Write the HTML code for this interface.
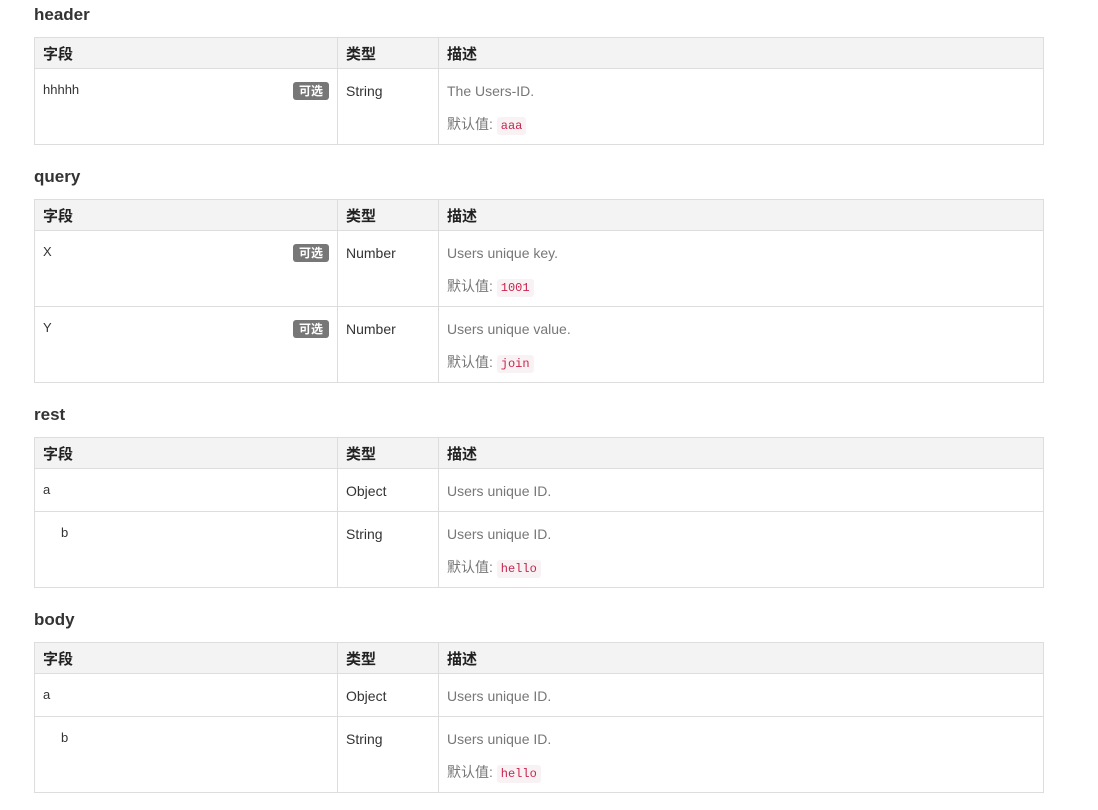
<!DOCTYPE html>
<html><head><meta charset="utf-8"><style>
body{margin:0;background:#fff;font-family:"Liberation Sans","Noto Sans CJK SC",sans-serif;}
h4{position:absolute;left:34px;margin:0;font-size:17px;font-weight:bold;color:#333;}
table{position:absolute;left:34px;width:1010px;border-collapse:collapse;table-layout:fixed;}
td,th{border:1px solid #ddd;vertical-align:top;padding:0;}
th{background:#f3f3f3;height:30px;text-align:left;font-size:15px;font-weight:bold;color:#222;vertical-align:middle;padding:0 8px}
td>div{box-sizing:border-box;overflow:hidden;padding:0 8px;position:relative}
.r76 td>div{height:75px}.r43 td>div{height:42px}
.f div{font-size:13px;color:#333;padding-top:13px}
.t div{font-size:14px;color:#333;padding-top:14px}
.d div{font-size:14px;color:#777;padding-top:13px}
.d p{margin:0 0 15px 0;line-height:18px}
.badge{position:absolute;right:8px;top:13px;background:#777;color:#fff;font-size:12px;font-weight:bold;padding:1px 6px;border-radius:3px;line-height:16px}
code{font-family:"Liberation Mono",monospace;font-size:12px;color:#c7254e;background:#f9f2f4;padding:2px 4px;border-radius:3px}
</style></head><body>
<h4 style="top:5px">header</h4>
<table style="top:37px"><colgroup><col style="width:303px"><col style="width:101px"><col></colgroup>
<tr><th>字段</th><th>类型</th><th>描述</th></tr>
<tr class="r76"><td class="f"><div>hhhhh<span class="badge">可选</span></div></td><td class="t"><div>String</div></td><td class="d"><div><p>The Users-ID.</p><p>默认值: <code>aaa</code></p></div></td></tr>
</table>
<h4 style="top:167px">query</h4>
<table style="top:199px"><colgroup><col style="width:303px"><col style="width:101px"><col></colgroup>
<tr><th>字段</th><th>类型</th><th>描述</th></tr>
<tr class="r76"><td class="f"><div>X<span class="badge">可选</span></div></td><td class="t"><div>Number</div></td><td class="d"><div><p>Users unique key.</p><p>默认值: <code>1001</code></p></div></td></tr>
<tr class="r76"><td class="f"><div>Y<span class="badge">可选</span></div></td><td class="t"><div>Number</div></td><td class="d"><div><p>Users unique value.</p><p>默认值: <code>join</code></p></div></td></tr>
</table>
<h4 style="top:405px">rest</h4>
<table style="top:437px"><colgroup><col style="width:303px"><col style="width:101px"><col></colgroup>
<tr><th>字段</th><th>类型</th><th>描述</th></tr>
<tr class="r43"><td class="f"><div>a</div></td><td class="t"><div>Object</div></td><td class="d"><div><p>Users unique ID.</p></div></td></tr>
<tr class="r76"><td class="f"><div style="padding-left:26px">b</div></td><td class="t"><div>String</div></td><td class="d"><div><p>Users unique ID.</p><p>默认值: <code>hello</code></p></div></td></tr>
</table>
<h4 style="top:610px">body</h4>
<table style="top:642px"><colgroup><col style="width:303px"><col style="width:101px"><col></colgroup>
<tr><th>字段</th><th>类型</th><th>描述</th></tr>
<tr class="r43"><td class="f"><div>a</div></td><td class="t"><div>Object</div></td><td class="d"><div><p>Users unique ID.</p></div></td></tr>
<tr class="r76"><td class="f"><div style="padding-left:26px">b</div></td><td class="t"><div>String</div></td><td class="d"><div><p>Users unique ID.</p><p>默认值: <code>hello</code></p></div></td></tr>
</table>
</body></html>
